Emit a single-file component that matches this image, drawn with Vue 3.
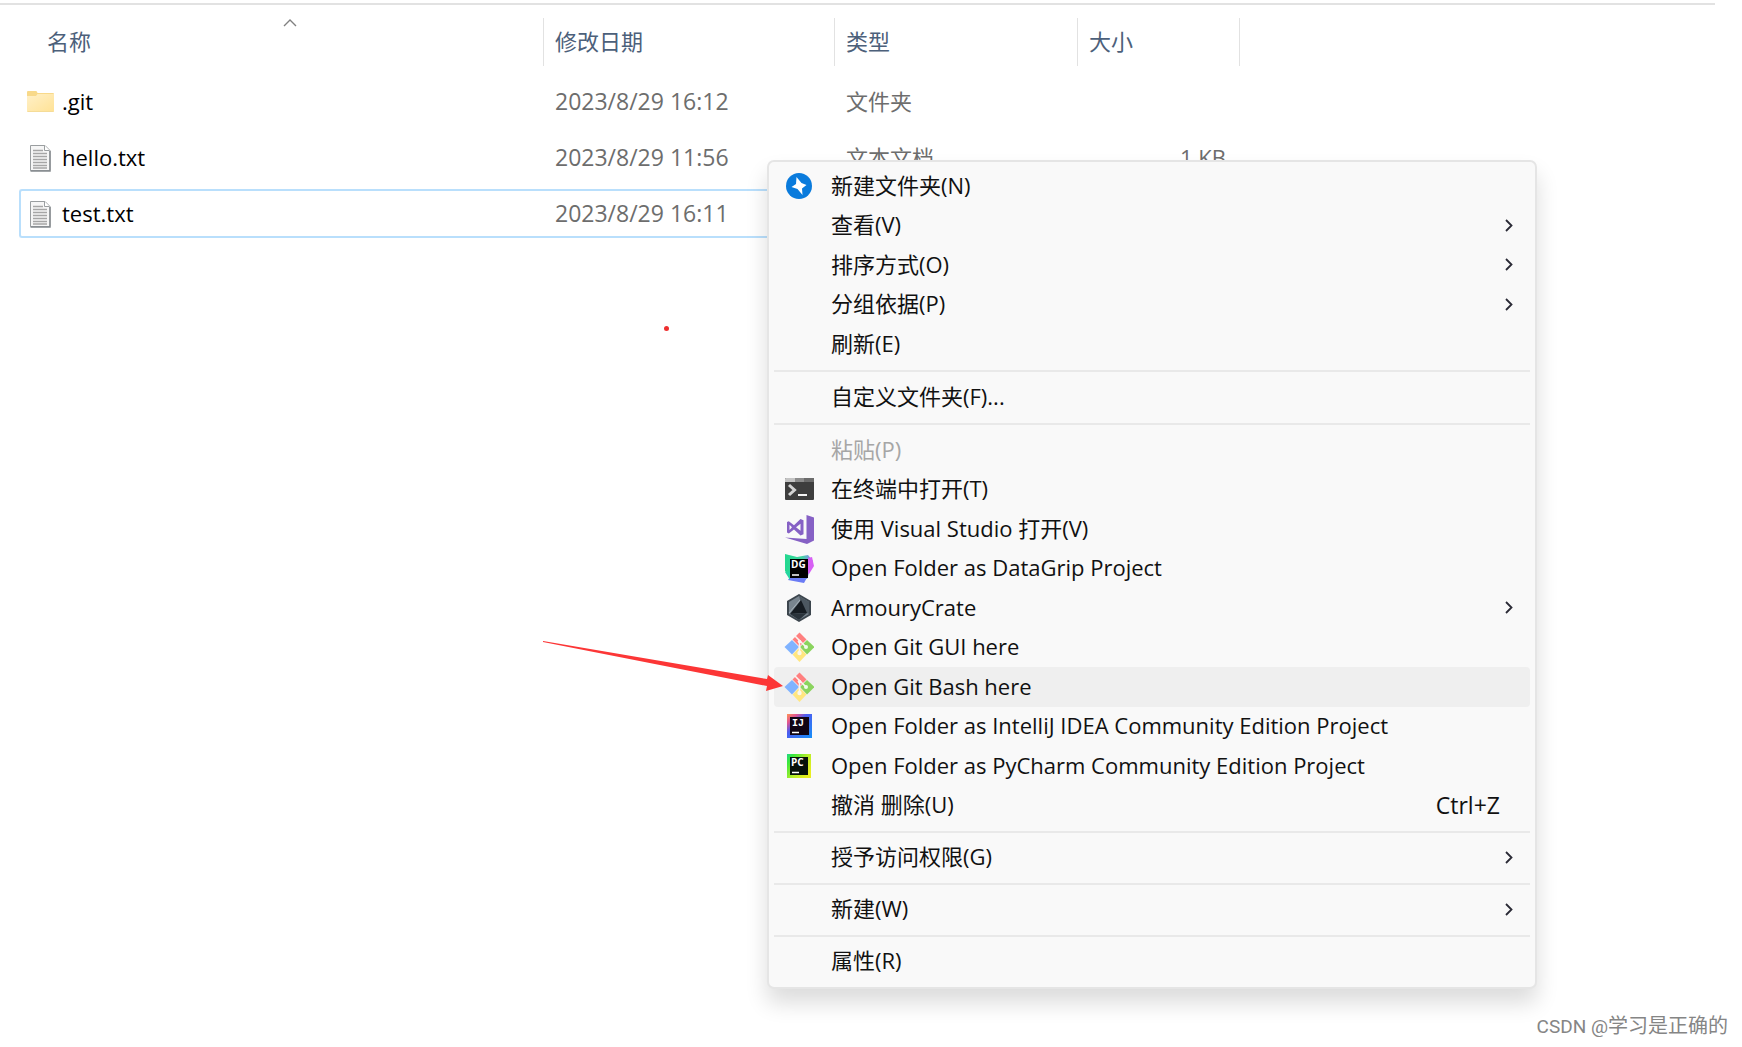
<script setup>
const columns = [
  { key: 'name', label: '名称', sorted: true },
  { key: 'date', label: '修改日期' },
  { key: 'type', label: '类型' },
  { key: 'size', label: '大小' },
]

const files = [
  { name: '.git', date: '2023/8/29 16:12', type: '文件夹', size: '', kind: 'folder' },
  { name: 'hello.txt', date: '2023/8/29 11:56', type: '文本文档', size: '1 KB', kind: 'text' },
  { name: 'test.txt', date: '2023/8/29 16:11', type: '', size: '', kind: 'text', selected: true },
]

const menu = [
  { label: '新建文件夹(N)', icon: 'bolt' },
  { label: '查看(V)', sub: true },
  { label: '排序方式(O)', sub: true },
  { label: '分组依据(P)', sub: true },
  { label: '刷新(E)' },
  { separator: true },
  { label: '自定义文件夹(F)...' },
  { separator: true },
  { label: '粘贴(P)', disabled: true },
  { label: '在终端中打开(T)', icon: 'terminal' },
  { label: '使用 Visual Studio 打开(V)', icon: 'vs' },
  { label: 'Open Folder as DataGrip Project', icon: 'datagrip' },
  { label: 'ArmouryCrate', icon: 'armoury', sub: true },
  { label: 'Open Git GUI here', icon: 'git' },
  { label: 'Open Git Bash here', icon: 'git', active: true },
  { label: 'Open Folder as IntelliJ IDEA Community Edition Project', icon: 'intellij' },
  { label: 'Open Folder as PyCharm Community Edition Project', icon: 'pycharm' },
  { label: '撤消 删除(U)', shortcut: 'Ctrl+Z' },
  { separator: true },
  { label: '授予访问权限(G)', sub: true },
  { separator: true },
  { label: '新建(W)', sub: true },
  { separator: true },
  { label: '属性(R)' },
]
</script>

<template>
  <main class="explorer">
    <div class="topline"></div>
    <table class="files">
      <colgroup>
        <col v-for="c in columns" :key="c.key" :class="'col-' + c.key" />
      </colgroup>
      <thead>
        <tr>
          <th v-for="c in columns" :key="c.key" scope="col" :class="'h-' + c.key">
            <div class="head">
              {{ c.label }}
              <svg v-if="c.sorted" class="sort" width="14" height="9" viewBox="0 0 14 9">
                <path d="M1 8 7 2l6 6" fill="none" stroke="#808080" stroke-width="1.4" />
              </svg>
            </div>
          </th>
        </tr>
      </thead>
      <tbody>
        <tr v-for="f in files" :key="f.name" :class="{ selected: f.selected }">
          <td class="name">
            <div class="file">
              <svg v-if="f.kind === 'folder'" width="28" height="28" viewBox="0 0 28 28">
                <defs>
                  <linearGradient id="folder" x1="0" y1="0" x2="1" y2="1">
                    <stop offset="0" stop-color="#fff0c8" />
                    <stop offset="1" stop-color="#ffe295" />
                  </linearGradient>
                </defs>
                <path d="M1 4q0-1 1-1h8q1 0 1.500 2H27q1 0 1 1v6H1z" fill="#f8d98a" />
                <path d="M1 8h9l1.500-2H28v17q0 1-1 1H2q-1 0-1-1z" fill="url(#folder)" />
                <path d="M1.500 23.500h26" stroke="#f5dc98" />
              </svg>
              <svg v-else width="28" height="28" viewBox="0 0 28 28">
                <path d="M4.500 1.500H19l5 5v20H4.500z" fill="#f6f6f6" stroke="#9a9ea0" />
                <path d="M24 7v20H4.500" fill="none" stroke="#858b8e" stroke-width="1.500" />
                <path d="M18.500 1.500v5h5" fill="#fff" stroke="#9a9ea0" />
                <path d="M7 6.500h10M7 9.500h14M7 12.500h14M7 15.500h14M7 18.500h14M7 21.500h14M7 24h14" stroke="#a6a6a6" stroke-width="1.500" />
              </svg>
              {{ f.name }}
            </div>
          </td>
          <td class="date">{{ f.date }}</td>
          <td class="type">{{ f.type }}</td>
          <td class="size">{{ f.size }}</td>
        </tr>
      </tbody>
    </table>

    <span class="dot"></span>

    <ul class="menu" role="menu">
      <li v-for="(m, i) in menu" :key="i" :class="{ separator: m.separator }" role="none">
        <button
          v-if="!m.separator"
          type="button"
          role="menuitem"
          class="item"
          :class="{ active: m.active }"
          :disabled="m.disabled"
        >
          <span class="icon">
            <svg v-if="m.icon === 'bolt'" width="30" height="30" viewBox="0 0 30 30">
              <circle cx="15" cy="15" r="13" fill="#0a7bdc" />
              <path d="M12.500 6 17.500 12 22.500 14 18 17.500 18.500 24 13.500 18 7.500 16 12 13z" fill="#fff" />
            </svg>
            <svg v-else-if="m.icon === 'terminal'" width="30" height="30" viewBox="0 0 30 30">
              <rect x="1" y="4" width="29" height="22" rx="1" fill="#3e3e3e" />
              <path d="M1 8V5q0-1 1-1h9v4z" fill="#c4c4c4" />
              <path d="M11 4h9v4h-9z" fill="#8c8c8c" />
              <path d="M20 4h9q1 0 1 1v3H20z" fill="#6c6c6c" />
              <path d="m5 11 5.500 5L5 21" fill="none" stroke="#d4d4d4" stroke-width="3" />
              <path d="M14 21h9" stroke="#f4f4f4" stroke-width="2" />
            </svg>
            <svg v-else-if="m.icon === 'vs'" width="30" height="30" viewBox="0 0 30 30">
              <path d="m22.500 1 7.500 2.500v23L23 30 1 23.500l21.500 1.500z" fill="#8661c5" />
              <path
                fill-rule="evenodd"
                d="m3 8 1.800-.8 5.200 4L16.500 5l3 1.200v14L16.500 21.500 10 15.400l-5.200 4L3 18.600zm2.500 2.700v5.200L8 13.300zm11-.9L12 13.300l4.500 3.500z"
                fill="#8661c5"
              />
            </svg>
            <svg v-else-if="m.icon === 'datagrip'" width="30" height="30" viewBox="0 0 30 30">
              <defs>
                <linearGradient id="dg" x1="0" y1="0" x2="1" y2="0">
                  <stop offset="0" stop-color="#22d88f" />
                  <stop offset="0.600" stop-color="#3fd5a0" />
                  <stop offset="1" stop-color="#9a7cff" />
                </linearGradient>
              </defs>
              <path d="m1 1 12 3 11-2 5 6-6 18-17-2-5-6z" fill="url(#dg)" />
              <path d="m24 5 4-1 2 9-5 8-2-1z" fill="#d760f4" />
              <path d="m6 24 17 1 2-4-5 9-16-3z" fill="#6b7cf5" />
              <path d="m1 19 5-1v9z" fill="#24d6a0" />
              <rect x="6" y="6" width="18" height="19" fill="#000" />
              <text x="7" y="15" class="tag">DG</text>
              <path d="M8 22h7" stroke="#fff" stroke-width="1.500" />
            </svg>
            <svg v-else-if="m.icon === 'armoury'" width="30" height="30" viewBox="0 0 30 30">
              <path d="m15 1 12 7v14l-12 7-12-7V8z" fill="#3c454d" />
              <path d="m15 3 10 6v12l-10 6-10-6V9z" fill="#78848e" />
              <path d="m15 3 10 6v12l-5-2z" fill="#4d5861" />
              <path d="M17 7 6 21l17-1z" fill="#161c22" />
              <path d="m6 21 17-1-8 7z" fill="#2a333b" />
              <path d="m5 20 11-13" stroke="#a5b0b8" />
            </svg>
            <svg v-else-if="m.icon === 'git'" width="30" height="30" viewBox="0 0 30 30">
              <path d="m15.500.500 7 7-7 7-7-7z" fill="#ff8080" />
              <path d="m23 8 7.500 7-7.500 7.500-7-7.500z" fill="#8bd45f" />
              <path d="m15.500 15.500 7 7-7 7.500-7-7.500z" fill="#ffe680" />
              <path d="m8 8 7 7-7 7.500L.500 15z" fill="#80b3ff" />
              <path d="m10.500 3.500 5 5V21m0-12.500 6.500 6.500" fill="none" stroke="#faf6f4" stroke-width="1.600" />
              <circle cx="15.500" cy="9.500" r="1.800" fill="#faf6f4" />
              <circle cx="15.500" cy="21" r="2.200" fill="#faf8ee" />
              <circle cx="22" cy="15" r="2" fill="#f3faee" />
            </svg>
            <svg v-else-if="m.icon === 'intellij'" width="30" height="30" viewBox="0 0 30 30">
              <defs>
                <linearGradient id="ij" x1="0" y1="0" x2="1" y2="1">
                  <stop offset="0" stop-color="#ff9556" />
                  <stop offset="0.200" stop-color="#e2558f" />
                  <stop offset="0.400" stop-color="#4d5df0" />
                  <stop offset="1" stop-color="#168ff8" />
                </linearGradient>
              </defs>
              <rect x="3" y="3" width="25" height="24" fill="url(#ij)" />
              <rect x="6" y="6" width="19" height="18" fill="#100414" />
              <text x="8" y="15" class="tag mono">IJ</text>
              <path d="M8 21.500h7" stroke="#fff" stroke-width="1.500" />
            </svg>
            <svg v-else-if="m.icon === 'pycharm'" width="30" height="30" viewBox="0 0 30 30">
              <defs>
                <linearGradient id="pc" x1="0" y1="0" x2="1" y2="0.700">
                  <stop offset="0" stop-color="#20d789" />
                  <stop offset="0.200" stop-color="#3ce83c" />
                  <stop offset="0.600" stop-color="#b5ee2a" />
                  <stop offset="1" stop-color="#e8ee20" />
                </linearGradient>
              </defs>
              <rect x="3" y="3" width="24" height="24" fill="url(#pc)" />
              <rect x="6" y="6" width="18" height="18" fill="#06120a" />
              <text x="7" y="15" class="tag">PC</text>
              <path d="M8 21.500h7" stroke="#fff" stroke-width="1.500" />
            </svg>
          </span>
          <span class="label">{{ m.label }}</span>
          <span v-if="m.shortcut" class="shortcut">{{ m.shortcut }}</span>
          <svg v-if="m.sub" class="chevron" width="8" height="13" viewBox="0 0 8 13">
            <path d="m1 1 5.500 5.500L1 12" fill="none" stroke="#2a2a35" stroke-width="1.800" />
          </svg>
        </button>
      </li>
    </ul>

    <svg class="arrow" width="240" height="52" viewBox="0 0 240 52">
      <path d="M0 1 224 39l1-4 15 11-17 5 1-5L0 2z" fill="#fc3636" />
    </svg>

    <footer class="watermark"><span class="site">CSDN @</span>学习是正确的</footer>
  </main>
</template>

<style>
body {
  margin: 0;
  background: #fff;
}
</style>

<style scoped>
.explorer {
  position: relative;
  box-sizing: border-box;
  min-height: 100vh;
  padding-top: 3px;
  overflow: hidden;
  font-family: "Open Sans", "Noto Sans CJK SC", sans-serif;
  font-size: 22px;
  color: #000;
  background: #fff;
}

.topline {
  height: 2px;
  margin-right: 27px;
  background: #e2e2e2;
}

.files {
  width: 1221px;
  margin: 6px 0 0 19px;
  table-layout: fixed;
  border-collapse: separate;
  border-spacing: 0 7px;
}

.col-name {
  width: 525px;
}

.col-date {
  width: 291px;
}

.col-type {
  width: 243px;
}

.col-size {
  width: 162px;
}

th {
  padding: 0 0 4px;
  font-weight: 400;
  text-align: left;
  color: #4c607a;
}

.head {
  position: relative;
  box-sizing: border-box;
  height: 48px;
  padding-left: 11px;
  line-height: 46px;
  border-right: 1px solid #e2e2e2;
}

.h-name .head {
  padding-left: 28px;
}

.sort {
  position: absolute;
  top: 0;
  left: 264px;
}

td {
  box-sizing: border-box;
  height: 49px;
  padding: 0 0 0 11px;
  line-height: 45px;
  color: #6d6d6d;
  white-space: nowrap;
  border: solid transparent;
  border-width: 2px 0;
}

.file {
  display: flex;
  align-items: center;
  gap: 8px;
}

.name {
  padding-left: 5px;
  color: #000;
  border-left-width: 2px;
}

.date {
  font-size: 23px;
}

.size {
  padding-right: 14px;
  text-align: right;
}

.selected td {
  border-color: #b9dffc;
}

.selected .name {
  border-radius: 3px 0 0 3px;
}

.dot {
  position: absolute;
  top: 326px;
  left: 664px;
  width: 5px;
  height: 5px;
  border-radius: 50%;
  background: #ee2f2f;
}

.menu {
  position: absolute;
  top: 160px;
  left: 767px;
  box-sizing: border-box;
  width: 770px;
  margin: 0;
  padding: 4px 5px 6px;
  list-style: none;
  background: #f9f9f9;
  border: 2px solid #e5e5e5;
  border-radius: 7px;
  box-shadow: 0 14px 22px rgba(0, 0, 0, 0.14);
}

.menu li {
  height: 39px;
}

.menu li:nth-child(odd) {
  height: 40px;
}

.menu li.separator {
  box-sizing: border-box;
  height: 13px;
  padding: 6px 0 5px;
}

.separator::before {
  display: block;
  height: 2px;
  content: "";
  background: #e9e9e9;
}

.item {
  display: flex;
  align-items: center;
  width: 100%;
  height: 100%;
  padding: 0 30px 1px 10px;
  font: inherit;
  line-height: 30px;
  color: #111;
  text-align: left;
  white-space: nowrap;
  background: none;
  border: 0;
  border-radius: 4px;
}

.shortcut {
  font-size: 23px;
}

.item.active {
  background: #efefef;
}

.item:disabled {
  color: #a6a6a6;
}

.icon {
  display: flex;
  width: 30px;
  height: 30px;
  margin-right: 17px;
}

.label {
  flex: 1;
  padding-bottom: 2px;
}

.chevron {
  margin-right: -13px;
}

.tag {
  font: 700 10px "Open Sans", sans-serif;
  fill: #fff;
}

.tag.mono {
  font-family: "Liberation Mono", monospace;
}

.arrow {
  position: absolute;
  top: 640px;
  left: 543px;
}

.watermark {
  position: absolute;
  right: 14px;
  bottom: 5px;
  font-family: "Noto Sans CJK SC", sans-serif;
  font-size: 20px;
  line-height: 30px;
  color: #858585;
}

.site {
  font-family: Roboto, sans-serif;
  font-size: 19px;
}
</style>
